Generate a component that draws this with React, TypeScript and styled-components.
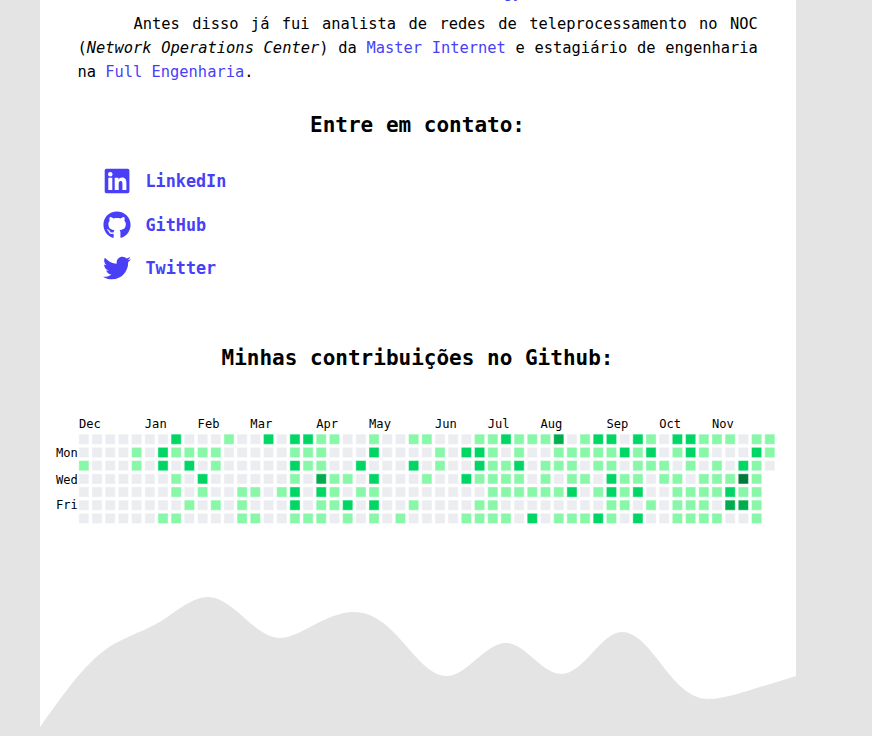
import React from "react";
import styled, { createGlobalStyle } from "styled-components";
import { FaGithub, FaTwitter } from "react-icons/fa";

const GlobalStyle = createGlobalStyle`
  * { box-sizing: border-box; }
  html, body { margin: 0; background: #e4e4e4; }
  body { height: 736px; overflow: hidden; font-family: "DejaVu Sans Mono", monospace; color: #000; }
`;

const Page = styled.main`
  width: 756px;
  height: 736px;
  margin-left: 40px;
  background: #fff;
  overflow: hidden;
  display: flex;
  flex-direction: column;
`;

const Paragraph = styled.p<{ $clipped?: boolean }>`
  margin: ${(p) => (p.$clipped ? "-19px 38.2px 0 37.4px" : "7px 38.2px 0 37.4px")};
  padding-left: ${(p) => (p.$clipped ? "426px" : "0")};
  text-indent: ${(p) => (p.$clipped ? "0" : "56px")};
  font-size: 15.4px;
  line-height: 24px;
  text-align: justify;
`;

const Anchor = styled.a`
  color: #483ff7;
  text-decoration: none;
`;

const Heading = styled.h2<{ $top: number }>`
  margin: ${(p) => p.$top}px 0 0;
  padding-right: 1px;
  font-size: 21px;
  line-height: 26px;
  font-weight: 700;
  text-align: center;
`;

const ContactList = styled.ul`
  list-style: none;
  margin: 21.5px 0 0 63px;
  padding: 0;
  display: flex;
  flex-direction: column;
`;

const ContactItem = styled.li`
  height: 43.6px;
  display: flex;
  align-items: center;
`;

const ContactLink = styled(Anchor)`
  display: flex;
  align-items: center;
  gap: 14.5px;
  font-size: 16.8px;
  font-weight: 700;
  svg { width: 28px; height: 28px; }
`;

const Chart = styled.svg`
  display: block;
  margin: 41px 0 0 12px;
  flex: none;
  font-size: 12.1px;
`;

const Wave = styled.svg`
  display: block;
  flex: none;
  margin-top: 48px;
`;

const LinkedInMark = () => (
  <svg viewBox="0 0 28 28" aria-hidden="true">
    <path
      fill="currentColor"
      fillRule="evenodd"
      d="M3.4 1.7H24.7A1.7 1.7 0 0 1 26.4 3.4V24.6A1.7 1.7 0 0 1 24.7 26.3H3.4A1.7 1.7 0 0 1 1.7 24.6V3.4A1.7 1.7 0 0 1 3.4 1.7Z
         M7.3 4.9A2.3 2.3 0 1 0 7.3 9.5A2.3 2.3 0 1 0 7.3 4.9Z
         M5.3 10.8V22.9H9.3V10.8Z
         M11.7 10.8V22.9H15.7V17C15.7 15.3 16.2 14.1 17.7 14.1C19.2 14.1 19.4 15.4 19.4 17.1V22.9H23.4V16.2C23.4 12.9 22.5 10.5 19.1 10.5C17.3 10.5 16.1 11.4 15.6 12.4H15.5V10.8Z"
    />
  </svg>
);

const levels = ["#ebedf0", "#88f7a8", "#00d664", "#00ad4e", "#007a3b"];

const weeks = [
  "00000002000100202211001001100011211130122021022111011",
  "00001021111000001110002000010221010011111212012100021",
  "10001020201000002110020002010021120111011011101010210",
  "0000000102000000103110200010021111010110211011011141",
  "0000000101001101202101100000000111111201212001111211",
  "0000000010101000201120200100001100000000110101110331",
  "0000001100001100111010101000011110201112102001111001",
];

const months: [string, number][] = [
  ["Dec", 0], ["Jan", 5], ["Feb", 9], ["Mar", 13], ["Apr", 18], ["May", 22],
  ["Jun", 27], ["Jul", 31], ["Aug", 35], ["Sep", 40], ["Oct", 44], ["Nov", 48],
];

const days: [string, number][] = [["Mon", 44.8], ["Wed", 71.5], ["Fri", 97]];

const STEP = 13.19;

const Contributions = () => (
  <Chart width="740" height="116" viewBox="0 0 740 116">
    {months.map(([name, col]) => (
      <text key={name} x={26.9 + col * STEP} y={15.8}>{name}</text>
    ))}
    {days.map(([name, y]) => (
      <text key={name} x={4} y={y}>{name}</text>
    ))}
    {weeks.map((row, r) =>
      row.split("").map((level, c) => (
        <rect
          key={r + "-" + c}
          x={27.3 + c * STEP}
          y={22.7 + r * STEP}
          width="9.15"
          height="9.15"
          fill={levels[Number(level)]}
          stroke={levels[Number(level)]}
          strokeOpacity="0.6"
        />
      ))
    )}
  </Chart>
);

export default function App() {
  return (
    <>
      <GlobalStyle />
      <Page>
        <Paragraph $clipped><Anchor href="#">gy</Anchor></Paragraph>
        <Paragraph>
          Antes disso já fui analista de redes de teleprocessamento no NOC (
          <em>Network Operations Center</em>) da <Anchor href="#">Master Internet</Anchor> e
          estagiário de engenharia na <Anchor href="#">Full Engenharia</Anchor>.
        </Paragraph>
        <Heading $top={28}>Entre em contato:</Heading>
        <ContactList>
          <ContactItem><ContactLink href="#"><LinkedInMark />LinkedIn</ContactLink></ContactItem>
          <ContactItem><ContactLink href="#"><FaGithub />GitHub</ContactLink></ContactItem>
          <ContactItem><ContactLink href="#"><FaTwitter />Twitter</ContactLink></ContactItem>
        </ContactList>
        <Heading $top={55}>Minhas contribuições no Github:</Heading>
        <Contributions />
        <Wave width="756" height="180" viewBox="0 576 756 180">
          <path
            fill="#e4e4e4"
            d="M0 727 C24 694 42 666 69 647 C83 638 99 633 116 624 C133 615 150 597 168 597 C193 597 215 638 240 638 C260 638 286 612 314 612 C356 612 376 676 407 676 C427 676 445 643 466 643 C485 643 502 674 521 674 C544 674 561 632 582 632 C612 632 631 699 668 699 C687 699 706 691 756 676 V756 H0 Z"
          />
        </Wave>
      </Page>
    </>
  );
}
